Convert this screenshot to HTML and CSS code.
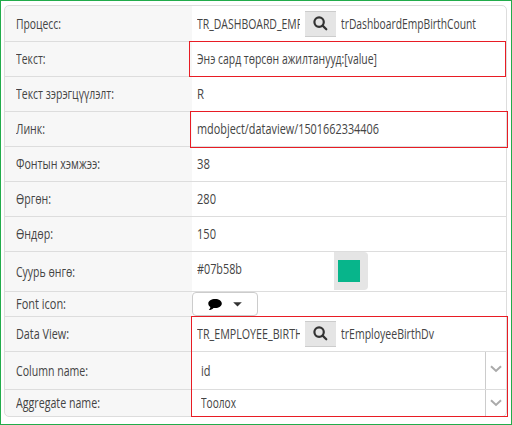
FILE: index.html
```html
<!DOCTYPE html>
<html lang="mn">
<head>
<meta charset="utf-8">
<title>Dashboard</title>
<link rel="stylesheet" href="styles.css">
</head>
<body>
<main class="frame">
  <div class="sheet">
    <div class="row first"><div class="label"><span class="t" data-w="45">Процесс:</span></div><div class="value"><div class="code"><span class="t" data-w="106">TR_DASHBOARD_EMP</span></div><button class="search"><svg width="15" height="15" viewBox="0 0 15 15"><circle cx="6.1" cy="6.1" r="4.7"/><path d="M9.6 9.6L13.3 13.3"/></svg></button><span class="t" data-w="135">trDashboardEmpBirthCount</span></div></div>
    <div class="row"><div class="label"><span class="t" data-w="29.5">Текст:</span></div><div class="value"><span class="t" data-w="180">Энэ сард төрсөн ажилтанууд:[value]</span></div><i class="mark mark-text"></i></div>
    <div class="row"><div class="label"><span class="t" data-w="98">Текст зэрэгцүүлэлт:</span></div><div class="value"><span class="t" data-w="7">R</span></div></div>
    <div class="row"><div class="label"><span class="t" data-w="29">Линк:</span></div><div class="value"><span class="t" data-w="182">mdobject/dataview/1501662334406</span></div><i class="mark mark-link"></i></div>
    <div class="row"><div class="label"><span class="t" data-w="84">Фонтын хэмжээ:</span></div><div class="value"><span class="t" data-w="13">38</span></div></div>
    <div class="row"><div class="label"><span class="t" data-w="35">Өргөн:</span></div><div class="value"><span class="t" data-w="19">280</span></div></div>
    <div class="row"><div class="label"><span class="t" data-w="37">Өндөр:</span></div><div class="value"><span class="t" data-w="19">150</span></div></div>
    <div class="row color"><div class="label"><span class="t" data-w="59">Суурь өнгө:</span></div><div class="value"><div class="hex"><span class="t" data-w="45">#07b58b</span></div><div class="swatch"><b></b></div></div></div>
    <div class="row icon"><div class="label"><span class="t" data-w="50">Font icon:</span></div><div class="value"><button class="picker"><svg width="14" height="13" viewBox="0 0 14 13"><path d="M7.2 1C11 1 13.8 2.8 13.8 5.5S11 10 7.2 10C6.6 10 6 10 5.5 9.9C4.3 11.2 2.6 12 .8 12C1.8 11.1 2.4 10 2.3 9C1 8.2 .3 7 .3 5.5C.3 2.8 3.3 1 7.2 1Z"/></svg><svg width="9" height="5" viewBox="0 0 9 5"><path d="M.2 .3H8.8L4.5 4.5Z"/></svg></button></div></div>
    <div class="row"><div class="label"><span class="t" data-w="53">Data View:</span></div><div class="value"><div class="code"><span class="t" data-w="106">TR_EMPLOYEE_BIRTH</span></div><button class="search"><svg width="15" height="15" viewBox="0 0 15 15"><circle cx="6.1" cy="6.1" r="4.7"/><path d="M9.6 9.6L13.3 13.3"/></svg></button><span class="t" data-w="93">trEmployeeBirthDv</span></div><i class="mark mark-data"></i></div>
    <div class="row column"><div class="label"><span class="t" data-w="72">Column name:</span></div><div class="value select"><span class="t" data-w="9.5">id</span><div class="arrow"><svg width="12" height="8" viewBox="0 0 12 8"><path d="M1 1.3L6 6L11 1.3"/></svg></div></div></div>
    <div class="row aggregate"><div class="label"><span class="t" data-w="84">Aggregate name:</span></div><div class="value select"><span class="t" data-w="35">Тоолох</span><div class="arrow"><svg width="12" height="8" viewBox="0 0 12 8"><path d="M1 1.3L6 6L11 1.3"/></svg></div></div></div>
  </div>
</main>
<script src="fit.js"></script>
</body>
</html>
```
FILE: styles.css
```css
* { box-sizing: border-box; }
body { margin: 0; background: #fff; color: #444; font: 14px/18px "Open Sans", "Noto Sans", sans-serif; }
.frame { width: 512px; height: 425px; padding: 4px 4px 0 3px; border: 1px solid #22ac4b; }
.sheet { width: 503px; height: 412px; border: 1px solid #ddd; border-radius: 5px; background: linear-gradient(90deg, #f7f7f7 187px, #fff 187px); }
.row { position: relative; display: flex; height: 35px; border-bottom: 1px solid #ddd; }
.first { height: 36px; }
.color { height: 40px; }
.icon { height: 25px; }
.column { height: 38px; }
.aggregate { height: 26px; border-bottom: 0; }
.label { width: 187px; padding-left: 11px; display: flex; align-items: center; }
.value { flex: 1; min-width: 0; padding-left: 4.5px; display: flex; align-items: center; }
.t { display: inline-block; white-space: nowrap; transform-origin: 0 50%; }
.code { width: 103.5px; overflow: hidden; display: flex; }
.search { flex: none; display: flex; align-items: center; justify-content: center; width: 31px; height: 26px; margin: 0 4.5px 0 5px; padding: 0 1px 1px 0; border: 0; border-top: 1px solid #ccc; border-bottom: 1px solid #ccc; background: #e5e5e5; }
.search svg { fill: none; stroke: #333; stroke-width: 2.2; stroke-linecap: round; }
.hex { width: 137.5px; padding-bottom: 6px; }
.swatch { align-self: flex-start; width: 34px; height: 38px; padding: 8px 0 0 4px; background: #e5e5e5; border-radius: 0 4px 4px 0; }
.swatch b { display: block; width: 22px; height: 22px; background: #07b58b; }
.icon .value { padding-left: 0; }
.picker { display: flex; align-items: center; width: 66px; height: 24px; padding: 0 0 0 15px; gap: 11px; border: 1px solid #ccc; border-radius: 4px; background: #fff; }
.picker svg { fill: #000; }
.picker svg + svg { fill: #333; margin-top: 1px; }
.value.select { padding-left: 9px; }
.arrow { align-self: stretch; display: flex; align-items: center; justify-content: center; width: 21px; margin-left: auto; border-left: 1px solid #ccc; }
.arrow svg { fill: none; stroke: #aaa; stroke-width: 2; }
.column .arrow { padding-bottom: 3px; }
.mark { position: absolute; z-index: 1; border: 1px solid #e81c24; pointer-events: none; }
.mark-text { left: 184px; top: -1px; width: 317px; height: 36px; }
.mark-link { left: 185px; top: -1px; width: 318px; height: 37px; }
.mark-data { left: 186px; top: -1px; width: 317px; height: 101px; }
```
FILE: fit.js
```js
document.querySelectorAll('.t').forEach(function (el) {
  var w = Number(el.dataset.w), natural = el.getBoundingClientRect().width;
  el.style.transform = 'scaleX(' + w / natural + ')';
  el.style.marginRight = (w - natural) + 'px';
});
```
